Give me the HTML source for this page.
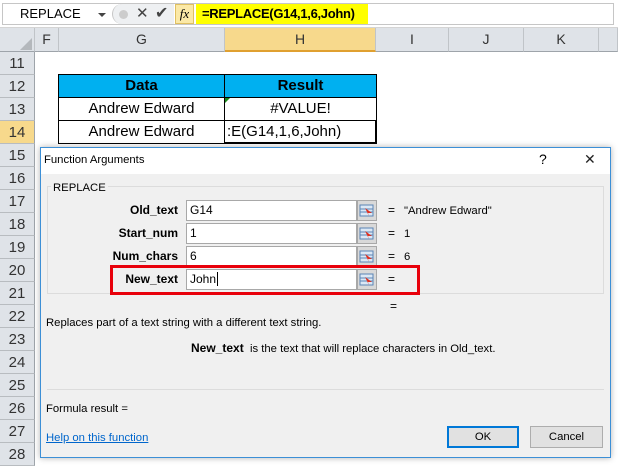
<!DOCTYPE html>
<html><head><style>
*{margin:0;padding:0;box-sizing:border-box}
body{width:618px;height:460px;position:relative;overflow:hidden;background:#fff;font-family:"Liberation Sans",sans-serif}
.a{position:absolute}
.ch{position:absolute;top:28px;height:24px;background:#dfe3e8;border-right:1px solid #c0c4c8;border-bottom:1px solid #9ea4aa;font-size:14px;color:#333;text-align:center;line-height:23px}
.rh{position:absolute;left:0;width:35px;height:23px;background:#dfe3e8;border-bottom:1px solid #b8bcc0;border-right:1px solid #9ea4aa;font-size:15px;color:#333;text-align:center;line-height:23px}
.cell{position:absolute;border:1px solid #000;font-size:15px;text-align:center;line-height:21px;color:#000}
.d{font-size:11.3px;color:#000;margin-top:1px}
.lbl{position:absolute;right:440px;font-size:12px;font-weight:bold;text-align:right}
.inp{position:absolute;left:186px;width:171px;height:21px;background:#fff;border:1px solid #a8a8a8;font-size:12px;line-height:19px;padding-left:3px}
.btn{position:absolute;left:357px;width:20px;height:21px;background:#d9d9d9;border:1px solid #a8a8a8}
.eq{position:absolute;left:388px;font-size:12px}
.val{position:absolute;left:404px;font-size:11.3px;margin-top:2px}
</style></head><body>
<div class="a" style="left:0;top:0;width:618px;height:28px;background:#fff;border-bottom:1px solid #d4d4d4"></div>
<div class="a" style="left:2px;top:3px;width:612px;height:22px;border:1px solid #c6c6c6"></div>
<div class="a" style="left:20px;top:6px;font-size:13px">REPLACE</div>
<div class="a" style="left:98px;top:13px;border-left:4px solid transparent;border-right:4px solid transparent;border-top:4px solid #444"></div>
<div class="a" style="left:112px;top:4px;width:62px;height:20px;background:#eef0f2;border-left:1px solid #c6c6c6;border-radius:10px 0 0 10px"></div>
<div class="a" style="left:119px;top:10px;width:9px;height:9px;border-radius:50%;background:#ccc"></div>
<div class="a" style="left:136px;top:4px;font-size:15px;color:#444">✕</div>
<div class="a" style="left:155px;top:3px;font-size:16px;color:#444">✔</div>
<div class="a" style="left:175px;top:4px;width:19px;height:20px;background:#fbe9a7;border:1px solid #e0c060;font-family:'Liberation Serif',serif;font-style:italic;font-size:13px;text-align:center;line-height:18px">fx</div>
<div class="a" style="left:196px;top:4px;width:172px;height:20px;background:#ffff00;font-size:13px;letter-spacing:-0.3px;font-weight:bold;line-height:20px;padding-left:6px">=REPLACE(G14,1,6,John)</div>
<div class="ch" style="left:0;width:35px"></div>
<div class="a" style="left:20px;top:38px;border-left:12px solid transparent;border-bottom:12px solid #b4b8bc"></div>
<div class="ch" style="left:35px;width:24px">F</div>
<div class="ch" style="left:59px;width:166px">G</div>
<div class="ch" style="left:225px;width:151px;background:#f7d98c;border-bottom:2px solid #e0a030">H</div>
<div class="ch" style="left:376px;width:73px">I</div>
<div class="ch" style="left:449px;width:75px">J</div>
<div class="ch" style="left:524px;width:75px">K</div>
<div class="ch" style="left:599px;width:19px"></div>
<div class="rh" style="top:52px">11</div>
<div class="rh" style="top:75px">12</div>
<div class="rh" style="top:98px">13</div>
<div class="rh" style="top:121px;background:#f7d98c">14</div>
<div class="rh" style="top:144px">15</div>
<div class="rh" style="top:167px">16</div>
<div class="rh" style="top:190px">17</div>
<div class="rh" style="top:213px">18</div>
<div class="rh" style="top:236px">19</div>
<div class="rh" style="top:259px">20</div>
<div class="rh" style="top:282px">21</div>
<div class="rh" style="top:305px">22</div>
<div class="rh" style="top:328px">23</div>
<div class="rh" style="top:351px">24</div>
<div class="rh" style="top:374px">25</div>
<div class="rh" style="top:397px">26</div>
<div class="rh" style="top:420px">27</div>
<div class="rh" style="top:443px">28</div>
<div class="cell" style="left:58px;top:74px;width:167px;height:24px;background:#00b0f0;font-weight:bold">Data</div>
<div class="cell" style="left:224px;top:74px;width:153px;height:24px;background:#00b0f0;font-weight:bold">Result</div>
<div class="cell" style="left:58px;top:97px;width:167px;height:24px">Andrew Edward</div>
<div class="cell" style="left:224px;top:97px;width:153px;height:24px">#VALUE!</div>
<div class="a" style="left:225px;top:98px;border-right:5px solid transparent;border-top:5px solid #1a8a1a"></div>
<div class="cell" style="left:58px;top:120px;width:167px;height:24px">Andrew Edward</div>
<div class="cell" style="left:224px;top:120px;width:153px;height:24px;text-align:left;padding-left:2px;border-width:1px 2px 2px 1px">:E(G14,1,6,John)</div>
<div class="a" style="left:40px;top:147px;width:571px;height:311px;background:#f0f0f0;border:1px solid #3c8fd6;box-shadow:0 0 6px rgba(0,0,0,.3)"></div>
<div class="a" style="left:41px;top:148px;width:569px;height:26px;background:#fff"></div>
<div class="a d" style="left:44px;top:153px">Function Arguments</div>
<div class="a" style="left:539px;top:151px;font-size:14px">?</div>
<div class="a" style="left:584px;top:151px;font-size:14px;color:#222">✕</div>
<div class="a" style="left:47px;top:186px;width:557px;height:108px;border:1px solid #dcdcdc"></div>
<div class="a d" style="left:51px;top:181px;background:#f0f0f0;padding:0 2px">REPLACE</div>
<div class="lbl" style="top:203px">Old_text</div>
<div class="lbl" style="top:226px">Start_num</div>
<div class="lbl" style="top:249px">Num_chars</div>
<div class="lbl" style="top:272px">New_text</div>
<div class="inp" style="top:200px">G14</div>
<div class="inp" style="top:223px">1</div>
<div class="inp" style="top:246px">6</div>
<div class="inp" style="top:269px">John<span style="border-left:1px solid #000;margin-left:1px"></span></div>
<div class="btn" style="top:200px"></div><div class="btn" style="top:223px"></div><div class="btn" style="top:246px"></div><div class="btn" style="top:269px"></div>
<svg class="a" style="left:359px;top:203px" width="16" height="86">
<g id="ic"><rect x="1" y="2" width="13" height="11" fill="#dbe8f5" stroke="#5b85b5"/><line x1="1" y1="6" x2="14" y2="6" stroke="#5b85b5"/><line x1="1" y1="9" x2="14" y2="9" stroke="#5b85b5"/><path d="M6 5 L13 10 L9 10 L10 13 Z" fill="#e03020"/></g>
<use href="#ic" y="23"/><use href="#ic" y="46"/><use href="#ic" y="69"/></svg>
<div class="eq" style="top:203px">=</div><div class="val" style="top:203px">"Andrew Edward"</div>
<div class="eq" style="top:226px">=</div><div class="val" style="top:226px">1</div>
<div class="eq" style="top:249px">=</div><div class="val" style="top:249px">6</div>
<div class="eq" style="top:272px">=</div>
<div class="a" style="left:110px;top:265px;width:310px;height:30px;border:3px solid #e8000b"></div>
<div class="eq" style="top:299px;left:390px">=</div>
<div class="a d" style="left:46px;top:316px">Replaces part of a text string with a different text string.</div>
<div class="a d" style="left:191px;top:340px"><b style="font-size:12px">New_text</b>&nbsp; is the text that will replace characters in Old_text.</div>
<div class="a" style="left:47px;top:389px;width:557px;height:1px;background:#dcdcdc"></div>
<div class="a d" style="left:46px;top:402px">Formula result =</div>
<div class="a d" style="left:46px;top:431px;color:#0066cc;text-decoration:underline">Help on this function</div>
<div class="a d" style="left:447px;top:426px;width:72px;height:22px;background:#e1e1e1;border:2px solid #0078d7;text-align:center;line-height:18px;margin-top:0">OK</div>
<div class="a d" style="left:530px;top:426px;width:73px;height:22px;background:#e1e1e1;border:1px solid #adadad;text-align:center;line-height:20px;margin-top:0">Cancel</div>
</body></html>
